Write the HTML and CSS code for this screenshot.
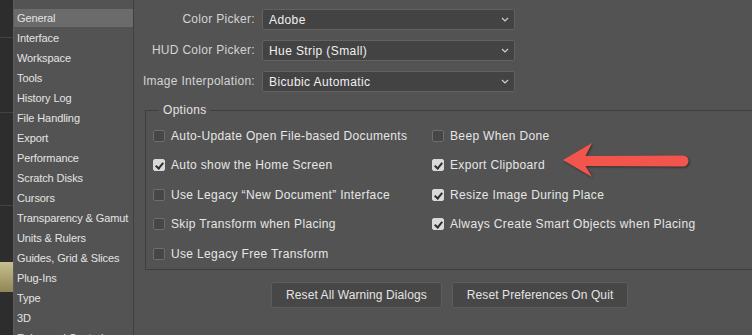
FILE: index.html
```html
<!DOCTYPE html>
<html>
<head>
	<meta charset="utf-8">
	<title>Preferences - General</title>
	<link rel="stylesheet" href="styles.css">
</head>
<body>
<div class="app">
	<div class="backdrop">
		<div class="bd-line bd-a"></div>
		<div class="bd-line bd-b"></div>
		<div class="bd-line bd-c"></div>
		<div class="bd-swatch"></div>
	</div>

	<nav class="sidebar">
		<ul>
			<li class="active">General</li>
			<li>Interface</li>
			<li>Workspace</li>
			<li>Tools</li>
			<li>History Log</li>
			<li>File Handling</li>
			<li>Export</li>
			<li>Performance</li>
			<li>Scratch Disks</li>
			<li>Cursors</li>
			<li>Transparency &amp; Gamut</li>
			<li>Units &amp; Rulers</li>
			<li>Guides, Grid &amp; Slices</li>
			<li>Plug-Ins</li>
			<li>Type</li>
			<li>3D</li>
			<li>Enhanced Controls</li>
		</ul>
	</nav>

	<main class="prefs">
		<div class="fields">
			<label class="field-label">Color Picker:</label>
			<div class="dropdown"><span>Adobe</span><svg class="chev" viewBox="0 0 8 5"><path d="M1 1 L4 4 L7 1"/></svg></div>

			<label class="field-label">HUD Color Picker:</label>
			<div class="dropdown"><span>Hue Strip (Small)</span><svg class="chev" viewBox="0 0 8 5"><path d="M1 1 L4 4 L7 1"/></svg></div>

			<label class="field-label">Image Interpolation:</label>
			<div class="dropdown"><span>Bicubic Automatic</span><svg class="chev" viewBox="0 0 8 5"><path d="M1 1 L4 4 L7 1"/></svg></div>
		</div>

		<fieldset class="options">
			<legend>Options</legend>
			<div class="opt-grid">
				<div class="opt"><span class="box"></span>Auto-Update Open File-based Documents</div>
				<div class="opt"><span class="box"></span>Beep When Done</div>
				<div class="opt"><span class="box on"></span>Auto show the Home Screen</div>
				<div class="opt"><span class="box on"></span>Export Clipboard</div>
				<div class="opt"><span class="box"></span>Use Legacy “New Document” Interface</div>
				<div class="opt"><span class="box on"></span>Resize Image During Place</div>
				<div class="opt"><span class="box"></span>Skip Transform when Placing</div>
				<div class="opt"><span class="box on"></span>Always Create Smart Objects when Placing</div>
				<div class="opt"><span class="box"></span>Use Legacy Free Transform</div>
			</div>
		</fieldset>

		<div class="actions">
			<button class="btn">Reset All Warning Dialogs</button>
			<button class="btn">Reset Preferences On Quit</button>
		</div>
	</main>
</div>

<!-- red callout arrow drawn over the dialog -->
<svg class="callout" width="140" height="46" viewBox="558 138 140 46">
	<path d="M563 160 L592 143 L585.5 156 L683 155.5 A5.5 5.5 0 0 1 683 166.5 L585.5 166 L592 177 Z"/>
</svg>
</body>
</html>
```

FILE: styles.css
```css
body{
	margin: 0;
	background: #535353;
	overflow: hidden;
	font-family: "Liberation Sans", Arial, sans-serif;
	color: #e2e2e2;
}
.app{
	display: flex;
	height: 335px;
}

/* window behind the dialog */
.backdrop{
	width: 13px;
	flex: none;
	background: #2d2d2d;
	position: relative;
}
.bd-line{
	position: absolute;
	left: 0;
	right: 0;
	height: 1px;
	background: #434343;
}
.bd-a{ top: 37px; }
.bd-b{ top: 112px; }
.bd-c{ top: 205px; }
.bd-swatch{
	position: absolute;
	left: 0;
	right: 0;
	top: 262px;
	height: 30px;
	background: linear-gradient(#c9c08e, #8e8656);
}

/* category list */
.sidebar{
	width: 119px;
	flex: none;
	border-left: 1px solid #5d5d5d;
	border-right: 1px solid #3f3f3f;
	background: #535353;
}
.sidebar ul{
	list-style: none;
	margin: 0;
	padding: 9px 0 0;
}
.sidebar li{
	height: 18px;
	line-height: 18px;
	margin-bottom: 2px;
	padding-left: 3px;
	font-size: 11px;
	letter-spacing: -0.1px;
	color: #e4e4e4;
	white-space: nowrap;
}
.sidebar li.active{
	background: #6b6b6b;
}

/* right pane */
.prefs{
	flex: 1;
	min-width: 0;
}
.fields{
	display: grid;
	grid-template-columns: 121px 253px;
	grid-auto-rows: 21px;
	column-gap: 7px;
	row-gap: 10px;
	padding-top: 9px;
}
.field-label{
	text-align: right;
	font-size: 12px;
	letter-spacing: 0.3px;
	line-height: 21px;
	color: #d4d4d4;
}
.dropdown{
	display: flex;
	align-items: center;
	justify-content: space-between;
	box-sizing: border-box;
	background: #434343;
	border: 1px solid #616161;
	border-radius: 2px;
	padding: 0 5px 0 6px;
	font-size: 12px;
	letter-spacing: 0.4px;
	color: #f0f0f0;
}
.chev{
	width: 8px;
	height: 5px;
}
.chev path{
	fill: none;
	stroke: #cfcfcf;
	stroke-width: 1.2;
}

.options{
	margin: 11px -30px 0 11px;
	padding: 4px 0 0 7px;
	border: 1px solid #3f3f3f;
	min-width: 0;
}
.options legend{
	margin-left: 6px;
	padding: 0 4px;
	font-size: 12px;
	letter-spacing: 0.3px;
	line-height: 14px;
	color: #e2e2e2;
}
.opt-grid{
	display: grid;
	grid-template-columns: 279px auto;
	grid-auto-rows: 29.5px;
}
.opt{
	display: flex;
	align-items: center;
	gap: 6px;
	font-size: 12px;
	letter-spacing: 0.35px;
	color: #e6e6e6;
	white-space: nowrap;
}
.box{
	width: 12px;
	height: 12px;
	box-sizing: border-box;
	border: 1px solid #6d6d6d;
	border-radius: 2px;
	background: #464646;
	position: relative;
	flex: none;
}
.box.on{
	background: #d9d9d9;
	border-color: #d9d9d9;
}
.box.on::after{
	content: "";
	position: absolute;
	left: 3px;
	top: 1px;
	width: 3px;
	height: 6px;
	border: solid #2e2e2e;
	border-width: 0 2px 2px 0;
	transform: rotate(40deg);
}

.actions{
	display: flex;
	gap: 10px;
	margin-top: 12px;
	padding-left: 137px;
}
.btn{
	height: 26px;
	padding: 0 14px;
	background: #474747;
	border: 1px solid #5d5d5d;
	border-radius: 3px;
	font-family: inherit;
	font-size: 12px;
	letter-spacing: 0.1px;
	color: #e4e4e4;
}

.callout{
	position: absolute;
	left: 558px;
	top: 138px;
	overflow: visible;
	filter: drop-shadow(1px 1.5px 1px rgba(0,0,0,0.45));
}
.callout path{
	fill: #f2554c;
}
```
